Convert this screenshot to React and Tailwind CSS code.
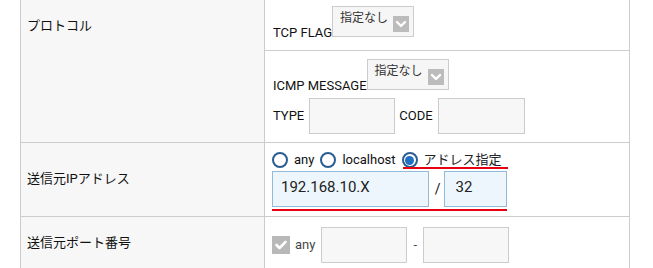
import React from 'react';

const font = { fontFamily: 'Roboto, "Noto Sans CJK JP", sans-serif' };

const Arrow = () => (
  <span className="flex w-[16px] h-[16px] items-center justify-center bg-[#bcbcbc]">
    <svg width="12" height="12" viewBox="0 0 12 12">
      <path d="M2 4l4 4 4-4" fill="none" stroke="#fff" strokeWidth="2.4" strokeLinecap="round" strokeLinejoin="round" />
    </svg>
  </span>
);

const SelectBox = ({ className = '' }) => (
  <div className={`flex w-[82px] h-[31px] items-start border border-[#cccccc] bg-[#f6f6f6] pt-[2px] pl-[7px] pr-[4px] ${className}`}>
    <span className="text-[12px] leading-[18px] text-[#333]">指定なし</span>
    <span className="ml-auto mt-[7px]">
      <Arrow />
    </span>
  </div>
);

const GrayInput = ({ className = '' }) => (
  <div className={`h-[36px] border border-[#cccccc] bg-[#f7f7f7] ${className}`} />
);

const Radio = ({ checked }) => (
  <span className="flex w-[16px] h-[16px] items-center justify-center rounded-full border-2 border-[#2b5c92] bg-white">
    {checked && <span className="w-[9px] h-[9px] rounded-full bg-[#1f6fc2]" />}
  </span>
);

const Label = ({ children }) => (
  <div className="w-[244px] shrink-0 bg-[#f7f7f7] border-r border-[#cccccc] pl-[6px] text-[13px] leading-[20px] text-[#111]">
    {children}
  </div>
);

export default function App() {
  return (
    <div className="w-[653px] h-[268px] overflow-hidden bg-white" style={font}>
      <div className="ml-[20px] w-[610px] border-l border-r border-[#cccccc] text-[13px] text-[#111]">
        {/* プロトコル */}
        <div className="flex border-b border-[#cccccc]">
          <Label>
            <div className="pt-[16px]">プロトコル</div>
          </Label>
          <div className="flex-1 flex flex-col">
            <div className="h-[51px] flex items-end border-b border-[#cccccc] pl-[8px] pb-[9px]">
              <span className="leading-[16px]">TCP FLAG</span>
              <SelectBox className="mb-[4px]" />
            </div>
            <div className="h-[91px] flex flex-col pl-[8px] pt-[8px]">
              <div className="flex items-end">
                <span className="leading-[16px]">ICMP MESSAGE</span>
                <SelectBox className="mb-[4px]" />
              </div>
              <div className="mt-[4px] flex items-center">
                <span className="leading-[16px]">TYPE</span>
                <GrayInput className="ml-[5px] w-[86px] h-[35px]" />
                <span className="ml-[4px] leading-[16px]">CODE</span>
                <GrayInput className="ml-[5px] w-[87px] h-[35px]" />
              </div>
            </div>
          </div>
        </div>

        {/* 送信元IPアドレス */}
        <div className="flex h-[74px] border-b border-[#cccccc]">
          <Label>
            <div className="flex h-full items-center pb-[1px]">送信元IPアドレス</div>
          </Label>
          <div className="flex-1 pl-[7px] pt-[9px]">
            <div className="flex items-center h-[16px] leading-[16px] text-[13px]">
              <Radio />
              <span className="ml-[6px]">any</span>
              <span className="ml-[6px]"><Radio /></span>
              <span className="ml-[6px]">localhost</span>
              <span className="relative ml-[6px] flex items-center">
                <Radio checked />
                <span className="ml-[6px] text-[#222]">アドレス指定</span>
                <span className="absolute left-[1px] right-[-6px] bottom-[-1px] h-[2px] bg-[#e60012]" />
              </span>
            </div>
            <div className="mt-[3px] flex w-[235px] items-center border-b-2 border-[#e60012] pb-[2px]">
              <div className="flex w-[158px] h-[36px] items-center border border-[#95bad8] bg-[#eef6fd] pl-[8px] pb-[3px] text-[15px] text-[#222]">
                192.168.10.X
              </div>
              <span className="ml-[6px] text-[14px]">/</span>
              <div className="ml-[4px] flex w-[63px] h-[36px] items-center border border-[#95bad8] bg-[#eef6fd] pl-[10px] pb-[3px] text-[15px] text-[#222]">
                32
              </div>
            </div>
          </div>
        </div>

        {/* 送信元ポート番号 */}
        <div className="flex h-[60px]">
          <Label>
            <div className="pt-[16px]">送信元ポート番号</div>
          </Label>
          <div className="flex-1 flex items-start pl-[7px] pt-[10px]">
            <div className="flex items-center">
              <span className="flex w-[18px] h-[18px] items-center justify-center bg-[#b8b8b8]">
                <svg width="14" height="14" viewBox="0 0 14 14">
                  <path d="M2.5 7l3 3 6-6" fill="none" stroke="#fff" strokeWidth="2.6" strokeLinecap="round" strokeLinejoin="round" />
                </svg>
              </span>
              <span className="ml-[5px] text-[#444] leading-[16px]">any</span>
              <GrayInput className="ml-[6px] w-[86px] h-[36px]" />
              <span className="ml-[6px] text-[#444]">-</span>
              <GrayInput className="ml-[6px] w-[86px] h-[36px]" />
            </div>
          </div>
        </div>
      </div>
    </div>
  );
}
